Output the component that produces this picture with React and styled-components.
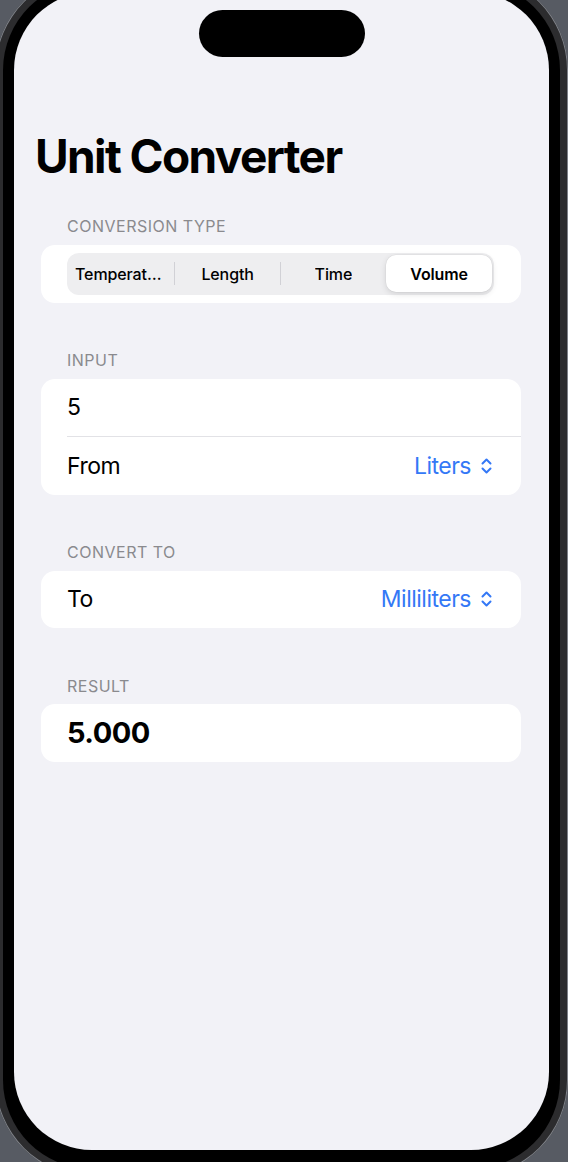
import styled, {createGlobalStyle} from 'styled-components';

const GlobalStyle = createGlobalStyle`
html, body {
	margin: 0;
	padding: 0;
	background: #575b63;
}
body {
	font-family: Inter, "Noto Sans", sans-serif;
	-webkit-font-smoothing: antialiased;
}
`;

const blue = '#3478f6';

const Page = styled.div`
height: 1162px;
overflow: hidden;
background: #575b63;
`;

const Phone = styled.div`
box-sizing: border-box;
width: 573px;
height: 1204px;
margin: -27px 0 0 -5px;
padding: 8px;
border-radius: 97px;
background: #2c2c2e;
box-shadow: inset 0 0 0 1px #7d8087;
`;

const Bezel = styled.div`
box-sizing: border-box;
height: 100%;
padding: 11px;
border-radius: 89px;
background: #000;
`;

const Screen = styled.div`
height: 1158px;
border-radius: 78px;
background: #f2f2f7;
display: flex;
flex-direction: column;
overflow: hidden;
`;

const Island = styled.div`
flex-shrink: 0;
width: 166px;
height: 47px;
margin: 18px auto 0;
border-radius: 24px;
background: #000;
`;

const Title = styled.h1`
margin: 71px 0 0;
padding-left: 21px;
font-size: 46px;
line-height: 56px;
font-weight: 700;
letter-spacing: -1.6px;
color: #000;
`;

const Content = styled.div`
padding: 0 28px 0 27px;
display: flex;
flex-direction: column;
`;

const SectionHeader = styled.div`
margin-top: ${p => p.$first ? 32 : 47.5}px;
padding-left: 26px;
font-size: 16px;
line-height: 20px;
letter-spacing: 0.5px;
color: #8a8a8e;
text-transform: uppercase;
`;

const Card = styled.div`
margin-top: 8.5px;
background: #fff;
border-radius: 14px;
overflow: hidden;
`;

const Row = styled.div`
height: 57.5px;
padding: 0 29px 0 26px;
display: flex;
align-items: center;
justify-content: space-between;
font-size: ${p => p.$big ? 29 : 23}px;
font-weight: ${p => p.$big ? 700 : 400};
letter-spacing: -0.5px;
color: #000;
`;

const Divider = styled.div`
height: 1px;
margin-left: 26px;
background: #e2e2e6;
`;

const Picker = styled.div`
display: flex;
align-items: center;
gap: 10px;
color: ${blue};
`;

const Segmented = styled.div`
margin: 8px 27px 8px 26px;
height: 42px;
box-sizing: border-box;
padding: 2.5px 2px;
border-radius: 12px;
background: #eeeef0;
display: grid;
grid-template-columns: repeat(4, 1fr);
`;

const Segment = styled.div`
position: relative;
min-width: 0;
display: flex;
align-items: center;
justify-content: center;
padding: 0 6px;
border-radius: 10px;
font-size: 16px;
font-weight: ${p => p.$active ? 600 : 500};
letter-spacing: -0.1px;
color: #000;
background: ${p => p.$active ? '#fff' : 'transparent'};
box-shadow: ${p => p.$active ? '0 2px 6px rgba(0,0,0,0.12), 0 0 0 0.5px rgba(0,0,0,0.05)' : 'none'};

${p => p.$divider && `
&::after {
	content: '';
	position: absolute;
	right: -0.5px;
	top: 7px;
	bottom: 7px;
	width: 1px;
	background: #d1d1d6;
}`}
`;

const SegLabel = styled.span`
overflow: hidden;
white-space: nowrap;
text-overflow: ellipsis;
`;

const UpDown = () => (
	<svg width="11" height="18" viewBox="0 0 11 18" fill="none" stroke={blue} strokeWidth="2" strokeLinecap="round" strokeLinejoin="round">
		<path d="M1.5 6.5 L5.5 2.5 L9.5 6.5" />
		<path d="M1.5 11.5 L5.5 15.5 L9.5 11.5" />
	</svg>
);

const types = ['Temperature', 'Length', 'Time', 'Volume'];

export default function App() {
	const active = 3;

	return <Page>
		<GlobalStyle />
		<Phone>
			<Bezel>
				<Screen>
					<Island />
					<Title>Unit Converter</Title>
					<Content>
						<SectionHeader $first>Conversion Type</SectionHeader>
						<Card>
							<Segmented>
								{types.map((t, i) =>
									<Segment key={t} $active={i === active} $divider={i < types.length - 1 && i !== active && i + 1 !== active}>
										<SegLabel>{t}</SegLabel>
									</Segment>
								)}
							</Segmented>
						</Card>

						<SectionHeader>Input</SectionHeader>
						<Card>
							<Row>5</Row>
							<Divider />
							<Row>
								From
								<Picker>Liters <UpDown /></Picker>
							</Row>
						</Card>

						<SectionHeader>Convert To</SectionHeader>
						<Card>
							<Row>
								To
								<Picker>Milliliters <UpDown /></Picker>
							</Row>
						</Card>

						<SectionHeader>Result</SectionHeader>
						<Card>
							<Row $big>5.000</Row>
						</Card>
					</Content>
				</Screen>
			</Bezel>
		</Phone>
	</Page>;
}
